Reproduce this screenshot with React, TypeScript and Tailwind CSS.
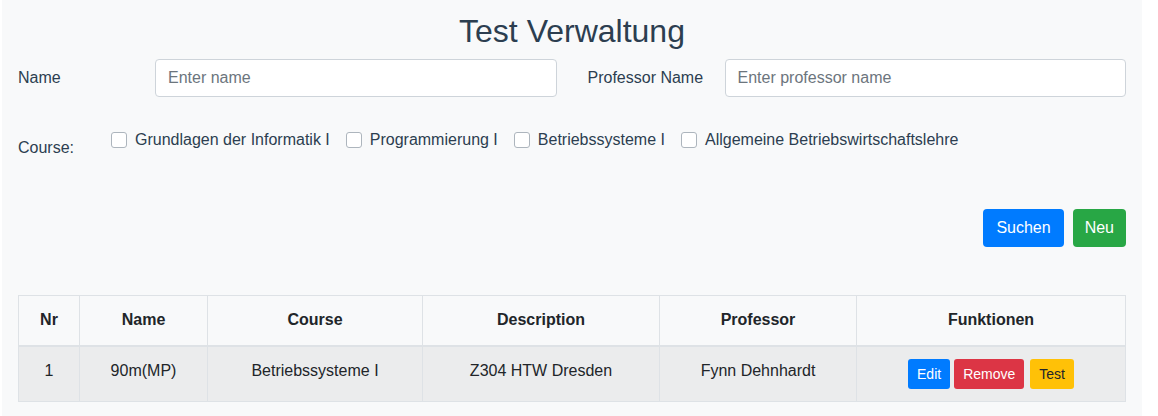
import React from "react";

const courses = [
  "Grundlagen der Informatik I",
  "Programmierung I",
  "Betriebssysteme I",
  "Allgemeine Betriebswirtschaftslehre",
];

const td = "border border-[#dee2e6] text-center align-top px-3 pt-[12px] pb-[12px] leading-[24px]";

export default function App() {
  return (
    <div className="w-[1158px] h-[416px] bg-white" style={{ fontFamily: '"Liberation Sans", Arial, sans-serif' }}>
      <div className="ml-[2px] w-[1140px] h-[416px] bg-[#f8f9fa] px-4 pt-[13px] text-[#2c3e50]">
        <h2 className="text-center text-[32px] leading-[37px] font-normal text-[#2c3e50]">Test Verwaltung</h2>

        <div className="mt-[9px] grid grid-cols-2 gap-x-[31px]">
          <div className="flex items-center">
            <label className="w-[137px] text-[16px]">Name</label>
            <input
              className="flex-1 h-[38px] rounded-[4px] border border-[#ced4da] bg-white px-3 text-[16px] placeholder:text-[#6c757d] outline-none"
              placeholder="Enter name"
            />
          </div>
          <div className="flex items-center">
            <label className="w-[137px] text-[16px]">Professor Name</label>
            <input
              className="flex-1 h-[38px] rounded-[4px] border border-[#ced4da] bg-white px-3 text-[16px] placeholder:text-[#6c757d] outline-none"
              placeholder="Enter professor name"
            />
          </div>
        </div>

        <div className="mt-[31px] flex items-start">
          <div className="w-[93px] mt-[8px] text-[16px] leading-[24px]">Course:</div>
          <div className="flex items-center gap-x-[16px]">
            {courses.map((c) => (
              <label key={c} className="flex items-center text-[16px] leading-[24px]">
                <input
                  type="checkbox"
                  className="appearance-none w-[16px] h-[16px] rounded-[3px] border border-[#adb5bd] bg-white mr-[8px]"
                />
                {c}
              </label>
            ))}
          </div>
        </div>

        <div className="mt-[49px] flex justify-end gap-[9px]">
          <button className="h-[38px] px-[13px] rounded-[4px] bg-[#007bff] text-white text-[16px]">Suchen</button>
          <button className="h-[38px] px-3 rounded-[4px] bg-[#28a745] text-white text-[16px]">Neu</button>
        </div>

        <table className="mt-[48px] w-full table-fixed border-collapse text-[16px] text-[#212529]">
          <colgroup>
            <col className="w-[61px]" />
            <col className="w-[128px]" />
            <col className="w-[215px]" />
            <col className="w-[237px]" />
            <col className="w-[197px]" />
            <col />
          </colgroup>
          <thead>
            <tr className="h-[50px]">
              {["Nr", "Name", "Course", "Description", "Professor", "Funktionen"].map((h) => (
                <th key={h} className="border border-[#dee2e6] border-b-2 text-center font-bold px-3">
                  {h}
                </th>
              ))}
            </tr>
          </thead>
          <tbody>
            <tr className="bg-[#ebeced]">
              <td className={td}>1</td>
              <td className={td}>90m(MP)</td>
              <td className={td}>Betriebssysteme I</td>
              <td className={td}>Z304 HTW Dresden</td>
              <td className={td}>Fynn Dehnhardt</td>
              <td className={td}>
                <div className="flex justify-center items-center">
                  <button className="h-[30px] px-[9px] rounded-[3px] bg-[#007bff] text-white text-[14px]">Edit</button>
                  <button className="ml-[4px] h-[30px] px-[9px] rounded-[3px] bg-[#dc3545] text-white text-[14px]">Remove</button>
                  <button className="ml-[6px] h-[30px] px-[9px] rounded-[3px] bg-[#ffc107] text-[#212529] text-[14px]">Test</button>
                </div>
              </td>
            </tr>
          </tbody>
        </table>
      </div>
    </div>
  );
}
